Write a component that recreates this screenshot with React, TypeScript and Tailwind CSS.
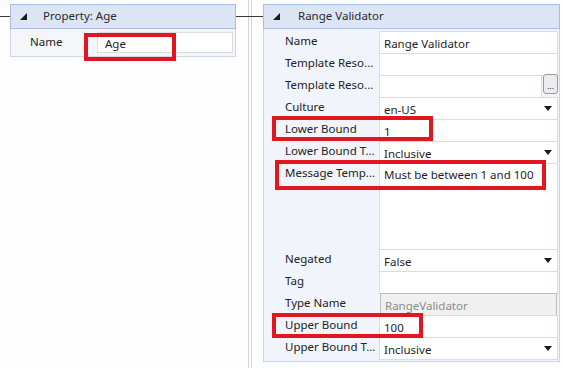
import type { ReactNode } from 'react';

const font = { fontFamily: '"Noto Sans", "Open Sans", sans-serif' };

function Triangle() {
  return (
    <svg width="7" height="7" viewBox="0 0 7 7" className="shrink-0">
      <polygon points="7,0 7,7 0,7" fill="#1b1b1b" />
    </svg>
  );
}

function Arrow() {
  return (
    <svg width="8" height="5" viewBox="0 0 8 5" className="ml-auto mr-[5px] shrink-0">
      <polygon points="0,0 8,0 4,5" fill="#1b1b1b" />
    </svg>
  );
}

function Header({ title, textPad }: { title: string; textPad: string }) {
  return (
    <div className="h-[25px] bg-[#dbe5f4] border border-[#a8bee2] flex items-center pl-[9px]">
      <Triangle />
      <span className={`${textPad} text-[11.5px] text-[#2a2a2a] pb-[1px]`}>{title}</span>
    </div>
  );
}

function Row({ label, h = 'h-[22px]', children }: { label: string; h?: string; children?: ReactNode }) {
  return (
    <div className={`flex ${h}`}>
      <div className="w-[115px] pl-[21px] text-[11.5px] text-[#222] leading-[19px] whitespace-nowrap">{label}</div>
      <div className="flex-1 flex min-w-0 -mb-px">{children}</div>
    </div>
  );
}

function Box({ text, arrow, gray, multi }: { text?: string; arrow?: boolean; gray?: boolean; multi?: boolean }) {
  return (
    <div
      className={`flex-1 flex ${multi ? 'items-start pt-[3px]' : 'items-center'} border ${
        gray ? 'bg-[#f0f0f0] border-[#bdbdbd] text-[#8c8c8c] mx-px' : 'bg-white border-[#dcdcdc] text-[#1e1e1e]'
      } pl-[4px] text-[11.5px] leading-none`}
    >
      <span className="pt-[2px]">{text}</span>
      {arrow && <Arrow />}
    </div>
  );
}

function RedBox({ className }: { className: string }) {
  return <div className={`absolute border-[4px] border-[#e2161f] ${className}`} />;
}

export default function App() {
  return (
    <div className="relative w-[563px] h-[368px] bg-[#fdfdfd] overflow-hidden flex" style={font}>
      {/* connector lines */}
      <div className="absolute left-0 top-[16px] w-[10px] h-px bg-[#3a3a3a]" />
      <div className="absolute left-[236px] top-[16px] w-[27px] h-px bg-[#3a3a3a]" />

      {/* left column */}
      <div className="w-[248px] pt-[4px] pl-[10px]">
        <div className="w-[226px]">
          <Header title="Property: Age" textPad="pl-[16px]" />
          <div className="h-[28px] bg-[#f4f6fa] border border-t-0 border-[#cfd8e8] flex pt-[3px]">
            <div className="w-[86px] pl-[19px] text-[11.5px] text-[#222] leading-[19px]">Name</div>
            <div className="flex-1 mr-[2px] h-[21px] bg-white border border-[#dcdcdc] pl-[7px] text-[11.5px] text-[#1e1e1e] flex items-center">
              <span className="pt-[2px]">Age</span>
            </div>
          </div>
        </div>
      </div>

      {/* splitter */}
      <div className="w-px h-full bg-[#d4d4d4]" />
      <div className="w-[2px]" />
      <div className="w-px h-full bg-[#d4d4d4]" />

      {/* right column */}
      <div className="flex-1 pt-[4px] pl-[11px] pr-[3px]">
        <Header title="Range Validator" textPad="pl-[18px]" />
        <div className="bg-[#f1f5fb] border border-t-0 border-[#c9d4e7] pt-[2px] pb-[2px] pr-[1px]">
          <Row label="Name"><Box text="Range Validator" /></Row>
          <Row label="Template Reso..."><Box /></Row>
          <Row label="Template Reso...">
            <Box />
            <div className="w-[15px] h-[20px] ml-[1px] -mt-px rounded-[3px] border border-[#9a9a9a] bg-[#ececec] text-[9px] leading-none flex items-end justify-center pb-[3px] text-[#333]">...</div>
          </Row>
          <Row label="Culture"><Box text="en-US" arrow /></Row>
          <Row label="Lower Bound"><Box text="1" /></Row>
          <Row label="Lower Bound T..."><Box text="Inclusive" arrow /></Row>
          <Row label="Message Temp..." h="h-[86px]"><Box text="Must be between 1 and 100" multi /></Row>
          <Row label="Negated"><Box text="False" arrow /></Row>
          <Row label="Tag"><Box /></Row>
          <Row label="Type Name"><Box text="RangeValidator" gray /></Row>
          <Row label="Upper Bound"><Box text="100" /></Row>
          <Row label="Upper Bound T..."><Box text="Inclusive" arrow /></Row>
        </div>
      </div>

      {/* annotation boxes */}
      <RedBox className="left-[84px] top-[33px] w-[92px] h-[28px]" />
      <RedBox className="left-[272px] top-[116px] w-[161px] h-[25px]" />
      <RedBox className="left-[275px] top-[160px] w-[271px] h-[30px]" />
      <RedBox className="left-[272px] top-[313px] w-[151px] h-[25px]" />
    </div>
  );
}
